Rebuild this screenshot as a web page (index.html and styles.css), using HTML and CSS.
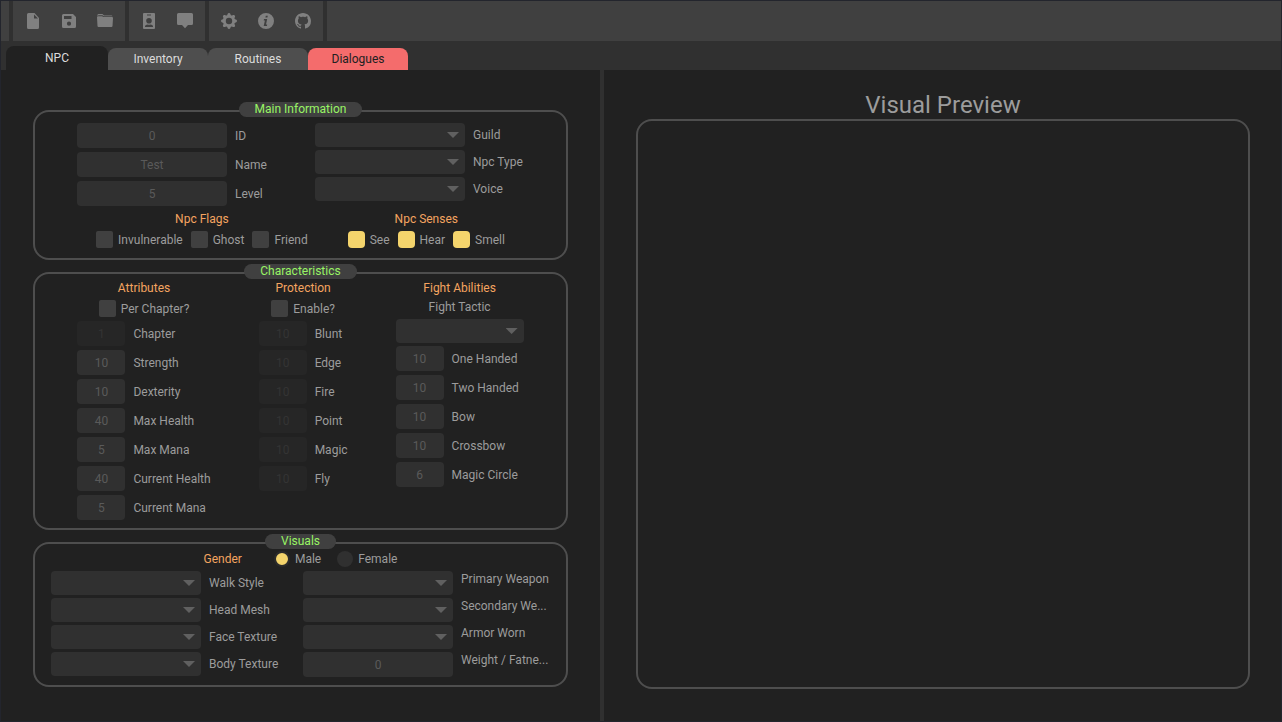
FILE: index.html
```html
<!DOCTYPE html>
<html lang="en">
<head>
<meta charset="utf-8">
<title>NPC Editor</title>
<link rel="stylesheet" href="styles.css">
</head>
<body>
<div class="app">
  <header class="toolbar">
    <div class="tool-edge"></div>
    <div class="tool-group">
      <button class="tool" aria-label="New"><svg viewBox="0 0 16 16"><path fill-rule="evenodd" d="M3.5 0H9.5L14 5V14.500A1.500 1.500 0 0 1 12.500 16H3.500A1.500 1.500 0 0 1 2 14.500V1.500A1.500 1.500 0 0 1 3.500 0ZM9 1.500V5.500H13Z"/></svg></button>
      <button class="tool" aria-label="Save"><svg viewBox="0 0 16 16"><path fill-rule="evenodd" d="M2.500 1H12L15 4V13.500A1.500 1.500 0 0 1 13.500 15H2.500A1.500 1.500 0 0 1 1 13.500V2.500A1.500 1.500 0 0 1 2.500 1ZM3 3V6H10.500V3ZM8 8.600A2.100 2.100 0 1 0 8 12.800A2.100 2.100 0 1 0 8 8.600Z"/></svg></button>
      <button class="tool" aria-label="Open"><svg viewBox="0 0 16 16"><path d="M.5 3.200V2A1 1 0 0 1 1.500 1H5.500L7 2.500H14.500A1 1 0 0 1 15.500 3.200H6.800L5.500 2.200H1.500Z"/><path d="M0 4.200Q0 3.200 1 3.200H5L6.500 4H15Q16 4 16 5L15.500 13Q15.400 14 14.500 14H1.500Q.6 14 .5 13Z"/></svg></button>
    </div>
    <div class="tool-group">
      <button class="tool" aria-label="Character"><svg viewBox="0 0 16 16"><path fill-rule="evenodd" d="M3 0H13A1 1 0 0 1 14 1V15A1 1 0 0 1 13 16H3A1 1 0 0 1 2 15V1A1 1 0 0 1 3 0ZM6 1.500V2.500H10V1.500ZM8 5A2.800 2.800 0 1 0 8 10.600A2.800 2.800 0 1 0 8 5ZM4 14H12V13Q11.500 11.800 9.500 11.500Q8 12.200 6.500 11.500Q4.500 11.800 4 13Z"/></svg></button>
      <button class="tool" aria-label="Dialogue"><svg viewBox="0 0 16 16"><path d="M1.500 0H14.500A1.500 1.500 0 0 1 16 1.500V10.500A1.500 1.500 0 0 1 14.500 12H11L8 15.300L5 12H1.500A1.500 1.500 0 0 1 0 10.500V1.500A1.500 1.500 0 0 1 1.500 0Z"/></svg></button>
    </div>
    <div class="tool-group tool-group-spaced">
      <button class="tool" aria-label="Settings"><svg viewBox="0 0 16 16"><path d="M9.405 1.050c-.413-1.400-2.397-1.400-2.810 0l-.1.340a1.464 1.464 0 0 1-2.105.872l-.310-.170c-1.283-.698-2.686.705-1.987 1.987l.169.311c.446.820.023 1.841-.872 2.105l-.340.1c-1.400.413-1.400 2.397 0 2.810l.340.1a1.464 1.464 0 0 1 .872 2.105l-.170.310c-.698 1.283.705 2.686 1.987 1.987l.311-.169a1.464 1.464 0 0 1 2.105.872l.1.340c.413 1.400 2.397 1.400 2.810 0l.1-.340a1.464 1.464 0 0 1 2.105-.872l.310.170c1.283.698 2.686-.705 1.987-1.987l-.169-.311a1.464 1.464 0 0 1 .872-2.105l.340-.1c1.400-.413 1.400-2.397 0-2.810l-.340-.1a1.464 1.464 0 0 1-.872-2.105l.170-.310c.698-1.283-.705-2.686-1.987-1.987l-.311.169a1.464 1.464 0 0 1-2.105-.872l-.1-.340zM8 11.200a3.200 3.200 0 1 1 0-6.400 3.200 3.200 0 0 1 0 6.400z"/></svg></button>
      <button class="tool" aria-label="About"><svg viewBox="0 0 16 16"><path fill-rule="evenodd" d="M8 0A8 8 0 1 0 8 16A8 8 0 1 0 8 0ZM7.800 2.800H9.800L9.400 4.600H7.400ZM6 6H9.200L8 11.500H9.200L8.900 13H5.700L6.900 7.500H5.700Z"/></svg></button>
      <button class="tool" aria-label="GitHub"><svg viewBox="0 0 16 16"><path d="M8 0C3.580 0 0 3.580 0 8c0 3.540 2.290 6.530 5.470 7.590.4.070.550-.170.550-.380 0-.190-.010-.820-.010-1.490-2.010.370-2.530-.490-2.690-.940-.090-.230-.480-.940-.820-1.130-.280-.150-.680-.520-.010-.530.630-.010 1.080.580 1.230.820.720 1.210 1.870.870 2.330.660.070-.520.280-.870.510-1.070-1.780-.2-3.640-.890-3.640-3.950 0-.870.310-1.590.820-2.150-.080-.2-.360-1.020.080-2.120 0 0 .670-.210 2.200.820.640-.180 1.320-.270 2-.270s1.360.090 2 .270c1.530-1.040 2.200-.820 2.200-.820.440 1.100.160 1.920.080 2.120.510.560.820 1.270.820 2.150 0 3.070-1.870 3.750-3.650 3.950.290.250.540.730.540 1.480 0 1.070-.010 1.930-.010 2.200 0 .210.150.460.550.380A8.010 8.010 0 0 0 16 8c0-4.420-3.580-8-8-8z"/></svg></button>
    </div>
    <div class="tool-rest"></div>
  </header>

  <nav class="tabs">
    <button class="tab tab-active">NPC</button>
    <button class="tab">Inventory</button>
    <button class="tab">Routines</button>
    <button class="tab tab-alert">Dialogues</button>
  </nav>

  <main class="workspace">
    <form class="editor">
      <section class="panel panel-main">
        <h2 class="panel-title">Main Information</h2>
        <div class="main-fields">
          <div class="stack">
            <label class="field"><input class="box wide" value="0"><span>ID</span></label>
            <label class="field"><input class="box wide" value="Test"><span>Name</span></label>
            <label class="field"><input class="box wide" value="5"><span>Level</span></label>
          </div>
          <div class="stack stack-tight">
            <label class="field"><span class="picker wide"><select></select></span><span>Guild</span></label>
            <label class="field"><span class="picker wide"><select></select></span><span>Npc Type</span></label>
            <label class="field"><span class="picker wide"><select></select></span><span>Voice</span></label>
          </div>
        </div>
        <div class="toggles">
          <div class="toggle-set">
            <h3 class="heading">Npc Flags</h3>
            <div class="checks">
              <label class="check"><input type="checkbox">Invulnerable</label>
              <label class="check"><input type="checkbox">Ghost</label>
              <label class="check"><input type="checkbox">Friend</label>
            </div>
          </div>
          <div class="toggle-set">
            <h3 class="heading">Npc Senses</h3>
            <div class="checks">
              <label class="check"><input type="checkbox" checked>See</label>
              <label class="check"><input type="checkbox" checked>Hear</label>
              <label class="check"><input type="checkbox" checked>Smell</label>
            </div>
          </div>
        </div>
      </section>

      <section class="panel panel-traits">
        <h2 class="panel-title">Characteristics</h2>
        <div class="column">
          <h3 class="heading">Attributes</h3>
          <label class="check"><input type="checkbox">Per Chapter?</label>
          <div class="stack">
            <label class="field"><input class="box" value="1" disabled><span>Chapter</span></label>
            <label class="field"><input class="box" value="10"><span>Strength</span></label>
            <label class="field"><input class="box" value="10"><span>Dexterity</span></label>
            <label class="field"><input class="box" value="40"><span>Max Health</span></label>
            <label class="field"><input class="box" value="5"><span>Max Mana</span></label>
            <label class="field"><input class="box" value="40"><span>Current Health</span></label>
            <label class="field"><input class="box" value="5"><span>Current Mana</span></label>
          </div>
        </div>
        <div class="column">
          <h3 class="heading">Protection</h3>
          <label class="check"><input type="checkbox">Enable?</label>
          <div class="stack">
            <label class="field"><input class="box" value="10" disabled><span>Blunt</span></label>
            <label class="field"><input class="box" value="10" disabled><span>Edge</span></label>
            <label class="field"><input class="box" value="10" disabled><span>Fire</span></label>
            <label class="field"><input class="box" value="10" disabled><span>Point</span></label>
            <label class="field"><input class="box" value="10" disabled><span>Magic</span></label>
            <label class="field"><input class="box" value="10" disabled><span>Fly</span></label>
          </div>
        </div>
        <div class="column">
          <h3 class="heading">Fight Abilities</h3>
          <label class="caption" for="tactic">Fight Tactic</label>
          <div class="tactic">
            <span class="picker medium"><select id="tactic"></select></span>
            <div class="stack">
              <label class="field"><input class="box" value="10"><span>One Handed</span></label>
              <label class="field"><input class="box" value="10"><span>Two Handed</span></label>
              <label class="field"><input class="box" value="10"><span>Bow</span></label>
              <label class="field"><input class="box" value="10"><span>Crossbow</span></label>
              <label class="field"><input class="box" value="6"><span>Magic Circle</span></label>
            </div>
          </div>
        </div>
      </section>

      <section class="panel panel-visuals">
        <h2 class="panel-title">Visuals</h2>
        <div class="gender">
          <h3 class="heading">Gender</h3>
          <div class="radios">
            <label class="check"><input type="radio" name="gender" checked>Male</label>
            <label class="check"><input type="radio" name="gender">Female</label>
          </div>
        </div>
        <div class="visual-fields">
          <div class="stack stack-tight">
            <label class="field"><span class="picker wide"><select></select></span><span>Walk Style</span></label>
            <label class="field"><span class="picker wide"><select></select></span><span>Head Mesh</span></label>
            <label class="field"><span class="picker wide"><select></select></span><span>Face Texture</span></label>
            <label class="field"><span class="picker wide"><select></select></span><span>Body Texture</span></label>
          </div>
          <div class="stack stack-tight stack-top">
            <label class="field"><span class="picker wide"><select></select></span><span>Primary Weapon</span></label>
            <label class="field"><span class="picker wide"><select></select></span><span>Secondary We...</span></label>
            <label class="field"><span class="picker wide"><select></select></span><span>Armor Worn</span></label>
            <label class="field"><input class="box wide" value="0"><span>Weight / Fatne...</span></label>
          </div>
        </div>
      </section>
    </form>
    <div class="splitter"></div>
    <section class="preview">
      <h2 class="preview-title">Visual Preview</h2>
      <div class="preview-frame"></div>
    </section>
  </main>
</div>
</body>
</html>
```
FILE: styles.css
```css
:root {
  --surface: #212121;
  --bar: #303030;
  --raised: #404040;
  --line: #4e4e4e;
  --text: #9c9c9c;
  --accent: #f4d46c;
}

* { box-sizing: border-box; }

body {
  margin: 0;
  background: var(--surface);
  color: var(--text);
  font: 12px/16px Roboto, "Liberation Sans", sans-serif;
}

button, input, select { font: inherit; color: inherit; margin: 0; border: 0; }
h2, h3 { margin: 0; font-size: 12px; font-weight: 400; }

.app {
  display: flex;
  flex-direction: column;
  min-height: 100vh;
  border: 1px solid #23252d;
}

.toolbar { display: flex; gap: 4px; height: 40px; background: var(--bar); }
.tool-edge { width: 8px; background: var(--raised); }
.tool-rest { flex: 1; background: var(--raised); }
.tool-group { display: flex; padding: 0 2px; background: var(--raised); }
.tool-group-spaced { gap: 1px; }
.tool { display: grid; place-items: center; width: 36px; padding: 0; background: none; }
.tool svg { width: 16px; height: 16px; fill: #808080; }

.tabs {
  display: flex;
  align-items: flex-end;
  height: 29px;
  padding-left: 5px;
  background: var(--bar);
}
.tab {
  width: 100px;
  height: 22px;
  padding: 0;
  border-radius: 8px 8px 0 0;
  background: var(--line);
  color: #dcdcdc;
}
.tab-active { width: 102px; height: 24px; background: var(--surface); }
.tab-alert { background: #f46c6c; color: #212121; }

.workspace {
  flex: 1;
  display: grid;
  grid-template-columns: minmax(535px, 599fr) 4px minmax(0, 677fr);
}
.splitter { background: var(--bar); }

.editor { display: flex; flex-direction: column; gap: 12px; padding: 40px 32px 32px; }
.panel { position: relative; border: 2px solid var(--line); border-radius: 16px; }
.panel-title {
  position: absolute;
  top: -10px;
  left: 0;
  right: 0;
  width: max-content;
  margin: 0 auto;
  padding: 0 16px;
  border-radius: 8px;
  background: var(--raised);
  color: #98f464;
  line-height: 15px;
}
.heading { color: #f4a460; text-align: center; line-height: 16px; }

.panel-main { padding: 11px 0 10px; }
.main-fields { display: grid; grid-template-columns: 238px 209px; justify-content: center; }
.toggles { display: flex; justify-content: center; gap: 40px; margin-top: 5px; }
.toggle-set { display: flex; flex-direction: column; gap: 4px; }
.checks { display: flex; gap: 8px; }

.panel-traits { display: flex; justify-content: center; gap: 48px; padding: 6px 0 8px; }
.column { display: flex; flex-direction: column; align-items: center; gap: 4px; }
.caption { line-height: 15px; }
.tactic { display: flex; flex-direction: column; gap: 3px; }

.panel-visuals { padding: 7px 0 8px; }
.gender { display: flex; justify-content: center; gap: 32px; margin-bottom: 4px; }
.radios { display: flex; gap: 16px; }
.visual-fields { display: grid; grid-template-columns: 252px 247px; justify-content: center; }

.stack { display: flex; flex-direction: column; gap: 4px; }
.stack-tight { gap: 3px; }
.field { display: flex; align-items: center; gap: 8px; white-space: nowrap; }
.stack-top .field { align-items: flex-start; }

.box {
  width: 48px;
  height: 25px;
  padding: 0;
  border-radius: 4px;
  background: var(--bar);
  color: #5a5a5a;
  text-align: center;
}
.box:disabled { background: #262626; color: #343434; }
.wide { width: 150px; }
.medium { width: 128px; }

.picker { position: relative; display: block; height: 24px; }
.picker select {
  display: block;
  width: 100%;
  height: 100%;
  border-radius: 4px;
  background: var(--bar);
  appearance: none;
}
.picker::after {
  content: "";
  position: absolute;
  top: 9px;
  right: 6px;
  width: 12px;
  height: 6px;
  background: #606060;
  clip-path: polygon(0 0, 100% 0, 50% 100%);
  pointer-events: none;
}

.check { display: flex; align-items: center; gap: 5px; }
.check input { width: 17px; height: 17px; appearance: none; background: var(--raised); }
.check input[type="checkbox"] { border-radius: 2px; }
.check input[type="checkbox"]:checked { border-radius: 4px; background: var(--accent); }
.check input[type="radio"] { width: 16px; height: 16px; border-radius: 50%; background: var(--bar); }
.check input[type="radio"]:checked { border: 2px solid #2b2b2b; background: var(--accent); }

.preview { display: flex; flex-direction: column; padding: 21px 31px 32px 32px; }
.preview-title { font-size: 24px; line-height: 28px; text-align: center; }
.preview-frame { flex: 1; border: 2px solid var(--line); border-radius: 16px; }
```
